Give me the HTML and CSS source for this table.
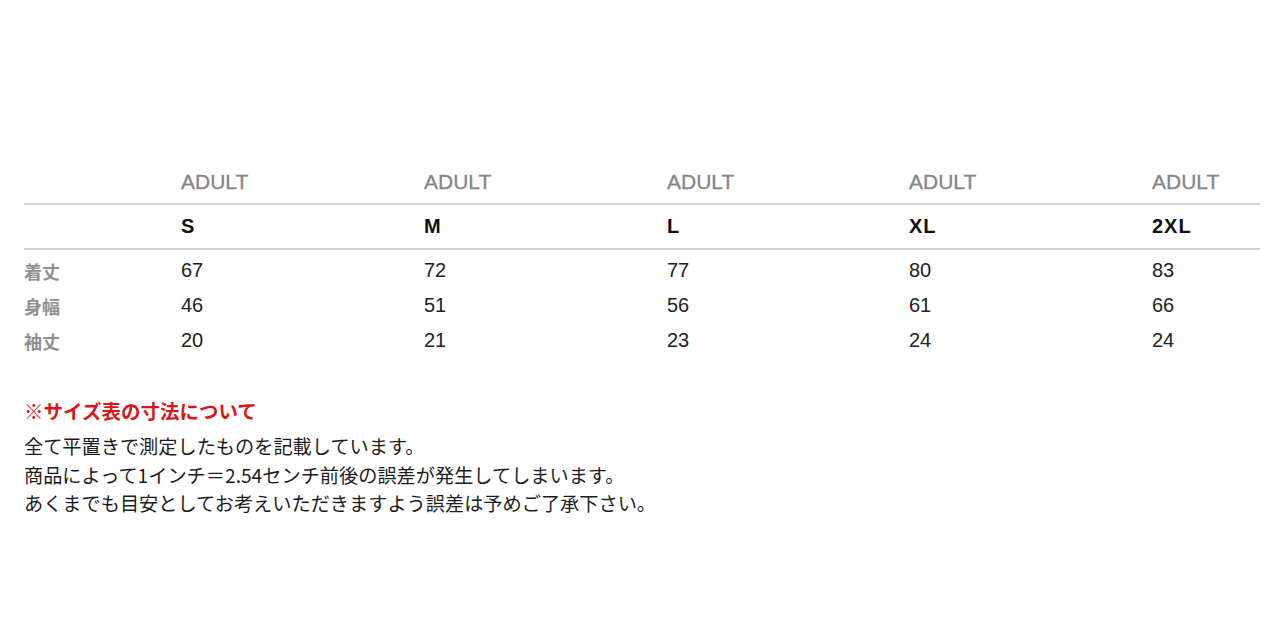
FILE: index.html
```html
<!DOCTYPE html>
<html lang="ja">
<head>
<meta charset="utf-8">
<link rel="stylesheet" href="styles.css">
</head>
<body>
<div class="page">
  <div class="size-table">
    <div class="row head">
      <div class="cell label"></div>
      <div class="cell">ADULT</div>
      <div class="cell">ADULT</div>
      <div class="cell">ADULT</div>
      <div class="cell">ADULT</div>
      <div class="cell">ADULT</div>
    </div>
    <div class="row sizes">
      <div class="cell label"></div>
      <div class="cell">S</div>
      <div class="cell">M</div>
      <div class="cell">L</div>
      <div class="cell">XL</div>
      <div class="cell">2XL</div>
    </div>
    <div class="body">
      <div class="row data">
        <div class="cell label">着丈</div>
        <div class="cell">67</div>
        <div class="cell">72</div>
        <div class="cell">77</div>
        <div class="cell">80</div>
        <div class="cell">83</div>
      </div>
      <div class="row data">
        <div class="cell label">身幅</div>
        <div class="cell">46</div>
        <div class="cell">51</div>
        <div class="cell">56</div>
        <div class="cell">61</div>
        <div class="cell">66</div>
      </div>
      <div class="row data">
        <div class="cell label">袖丈</div>
        <div class="cell">20</div>
        <div class="cell">21</div>
        <div class="cell">23</div>
        <div class="cell">24</div>
        <div class="cell">24</div>
      </div>
    </div>
  </div>
  <div class="notes">
    <p class="note-title">※サイズ表の寸法について</p>
    <p class="note-text">全て平置きで測定したものを記載しています。<br>商品によって1インチ＝2.54センチ前後の誤差が発生してしまいます。<br>あくまでも目安としてお考えいただきますよう誤差は予めご了承下さい。</p>
  </div>
</div>
</body>
</html>
```
FILE: styles.css
```css
html, body {
  margin: 0;
  padding: 0;
  background: #ffffff;
}
body {
  font-family: "Liberation Sans", Arial, "Noto Sans CJK JP", sans-serif;
  color: #222;
}
.page {
  padding: 166px 20px 0 24px;
}
.size-table {
  width: 1236px;
}
.row {
  display: grid;
  grid-template-columns: 157px 243px 243px 242px 243px 1fr;
  align-items: center;
}
.row.head {
  height: 39px;
  border-bottom: 2px solid #d0d0d0;
  font-size: 21px;
  color: #858585;
  align-items: start;
  padding-top: 4px;
  box-sizing: border-box;
}
.row.head .cell {
  line-height: 24px;
  -webkit-text-stroke: 0.3px #858585;
}
.row.sizes {
  height: 45px;
  border-bottom: 2px solid #d0d0d0;
  font-size: 20px;
  font-weight: bold;
  letter-spacing: 1px;
  color: #111;
  padding-bottom: 0;
  box-sizing: border-box;
}
.body {
  padding-top: 3px;
}
.row.data {
  height: 35px;
  font-size: 20px;
  color: #222;
}
.row.data .label {
  font-family: "Noto Sans CJK JP", sans-serif;
  font-size: 18px;
  font-weight: bold;
  color: #909090;
}
.notes {
  margin-top: 40px;
}
.note-title {
  margin: 0;
  font-family: "Noto Sans CJK JP", sans-serif;
  font-size: 19.5px;
  font-weight: bold;
  color: #d81818;
  line-height: 26px;
}
.note-text {
  margin: 8px 0 0;
  font-family: "Noto Sans CJK JP", sans-serif;
  font-size: 19.2px;
  line-height: 28.5px;
  color: #1c1c1c;
}
```
